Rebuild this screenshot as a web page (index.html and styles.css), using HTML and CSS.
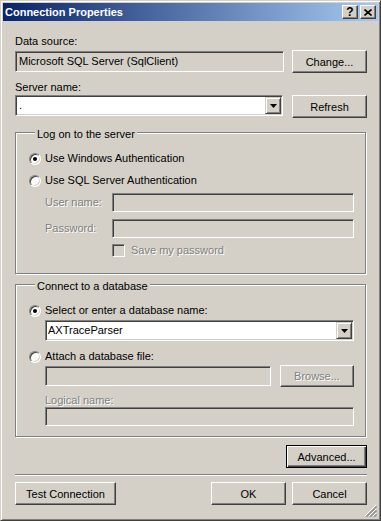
FILE: index.html
```html
<!DOCTYPE html>
<html>
<head>
    <title>Connection Properties</title>
    <link rel="stylesheet" href="styles.css">
</head>
<body>
    <div class="window">
        <div class="titlebar">
            <span class="title">Connection Properties</span>
            <div class="caption-buttons">
                <span class="cap-btn cap-help">?</span>
                <span class="cap-btn">
                    <svg width="8" height="7" viewBox="0 0 8 7"><path d="M0.5 0.5 L7.5 6.5 M7.5 0.5 L0.5 6.5" stroke="#000" stroke-width="1.6" fill="none"/></svg>
                </span>
            </div>
        </div>

        <div class="content">
            <div class="label">Data source:</div>
            <div class="row row-source">
                <div class="field field-readonly source-field">Microsoft SQL Server (SqlClient)</div>
                <button class="btn btn-side">Change...</button>
            </div>

            <div class="label label-server">Server name:</div>
            <div class="row row-server">
                <div class="field combo server-combo">
                    <span class="combo-text">.</span>
                    <span class="combo-button">
                        <svg width="7" height="4" viewBox="0 0 7 4"><polygon points="0,0 7,0 3.5,4" fill="#000"/></svg>
                    </span>
                </div>
                <button class="btn btn-side">Refresh</button>
            </div>

            <div class="group group-logon">
                <div class="group-title">Log on to the server</div>
                <div class="option option-first">
                    <span class="radio"><span class="radio-dot"></span></span>
                    <span>Use Windows Authentication</span>
                </div>
                <div class="option option-next">
                    <span class="radio"></span>
                    <span>Use SQL Server Authentication</span>
                </div>
                <div class="cred-row cred-user">
                    <span class="cred-label disabled">User name:</span>
                    <div class="field field-disabled cred-input"></div>
                </div>
                <div class="cred-row cred-pass">
                    <span class="cred-label disabled">Password:</span>
                    <div class="field field-disabled cred-input"></div>
                </div>
                <div class="check-row">
                    <span class="checkbox"></span>
                    <span class="disabled">Save my password</span>
                </div>
            </div>

            <div class="group group-db">
                <div class="group-title">Connect to a database</div>
                <div class="option option-first">
                    <span class="radio"><span class="radio-dot"></span></span>
                    <span>Select or enter a database name:</span>
                </div>
                <div class="field combo db-combo">
                    <span class="combo-text combo-text-tight">AXTraceParser</span>
                    <span class="combo-button">
                        <svg width="7" height="4" viewBox="0 0 7 4"><polygon points="0,0 7,0 3.5,4" fill="#000"/></svg>
                    </span>
                </div>
                <div class="option option-attach">
                    <span class="radio"></span>
                    <span>Attach a database file:</span>
                </div>
                <div class="file-row">
                    <div class="field field-disabled file-input"></div>
                    <button class="btn btn-browse disabled">Browse...</button>
                </div>
                <div class="indent-label disabled">Logical name:</div>
                <div class="field field-disabled logical-input"></div>
            </div>

            <div class="row row-advanced">
                <button class="btn btn-default">Advanced...</button>
            </div>

            <div class="separator"></div>

            <div class="row row-bottom">
                <button class="btn btn-test">Test Connection</button>
                <div class="bottom-right">
                    <button class="btn btn-side">OK</button>
                    <button class="btn btn-side">Cancel</button>
                </div>
            </div>
        </div>

        <svg class="grip" width="12" height="12" viewBox="0 0 12 12">
            <path d="M11 0 L0 11 M11 4 L4 11 M11 8 L8 11" stroke="#fff" stroke-width="1" fill="none"/>
            <path d="M11.5 1 L1 11.5 M12 1.5 L1.5 12 M11.5 5 L5 11.5 M12 5.5 L5.5 12 M11.5 9 L9 11.5 M12 9.5 L9.5 12" stroke="#808080" stroke-width="1" fill="none"/>
        </svg>
    </div>
</body>
</html>
```

FILE: styles.css
```css
body {
    margin: 0;
    background-color: #d4d0c8;
    font-family: "Liberation Sans", Arial, sans-serif;
    font-size: 11px;
    line-height: 13px;
    color: #000000;
}

.window {
    position: relative;
    box-sizing: border-box;
    width: 381px;
    height: 521px;
    padding: 2px;
    background-color: #d4d0c8;
    border: 1px solid;
    border-color: #d4d0c8 #404040 #404040 #d4d0c8;
    box-shadow: inset 1px 1px #ffffff, inset -1px -1px #808080;
}

/* title bar */
.titlebar {
    display: flex;
    align-items: center;
    justify-content: space-between;
    height: 18px;
    padding: 0 2px 0 2px;
    background: linear-gradient(to right, #0a246a, #a6caf0);
}

.title {
    color: #ffffff;
    font-weight: bold;
}

.caption-buttons {
    display: flex;
    gap: 2px;
}

.cap-btn {
    display: flex;
    align-items: center;
    justify-content: center;
    box-sizing: border-box;
    width: 16px;
    height: 14px;
    background-color: #d4d0c8;
    border: 1px solid;
    border-color: #ffffff #404040 #404040 #ffffff;
    box-shadow: inset -1px -1px #808080;
    font-weight: bold;
    font-size: 12px;
}

/* content */
.content {
    padding: 14px 11px 0 12px;
}

.row {
    display: flex;
    justify-content: space-between;
}

.row-source {
    margin-top: 2px;
    align-items: center;
}

.label-server {
    margin-top: 8px;
}

.row-server {
    margin-top: 1px;
    align-items: flex-start;
}

.field {
    box-sizing: border-box;
    height: 21px;
    padding: 0 2px;
    border: 1px solid;
    border-color: #808080 #ffffff #ffffff #808080;
    box-shadow: inset 1px 1px #404040, inset -1px -1px #d4d0c8;
    background-color: #ffffff;
    line-height: 19px;
    white-space: nowrap;
}

.field-readonly,
.field-disabled {
    background-color: #d4d0c8;
}

.source-field {
    width: 269px;
    padding-left: 3px;
}

.combo {
    display: flex;
    align-items: center;
    padding: 0 1px 0 1px;
}

.combo-text {
    flex: 1;
    padding-left: 2px;
}

.combo-text-tight {
    padding-left: 1px;
}

.combo-button {
    display: flex;
    align-items: center;
    justify-content: center;
    box-sizing: border-box;
    width: 16px;
    height: 17px;
    background-color: #d4d0c8;
    border: 1px solid;
    border-color: #d4d0c8 #404040 #404040 #d4d0c8;
    box-shadow: inset 1px 1px #ffffff, inset -1px -1px #808080;
}

.server-combo {
    width: 268px;
}

.btn {
    box-sizing: border-box;
    height: 23px;
    padding: 0;
    background-color: #d4d0c8;
    border: 1px solid;
    border-color: #ffffff #404040 #404040 #ffffff;
    box-shadow: inset -1px -1px #808080;
    font-family: "Liberation Sans", Arial, sans-serif;
    font-size: 11px;
    color: #000000;
}

.btn-side {
    width: 75px;
}

.disabled {
    color: #808080;
    text-shadow: 1px 1px #ffffff;
}

/* group boxes */
.group {
    margin-right: 1px;
    padding: 0 11px 0 13px;
    border: 1px solid #808080;
    box-shadow: inset 1px 1px #ffffff, 1px 1px #ffffff;
}

.group-logon {
    margin-top: 14px;
    padding-bottom: 16px;
}

.group-db {
    margin-top: 10px;
    padding-bottom: 10px;
}

.group-title {
    width: fit-content;
    margin: -5px 0 0 6px;
    padding: 0 2px;
    background-color: #d4d0c8;
}

.option {
    display: flex;
    align-items: center;
    gap: 4px;
    height: 13px;
}

.option-first {
    margin-top: 11px;
}

.option-next {
    margin-top: 9px;
}

.option-attach {
    margin-top: 9px;
}

.radio {
    display: flex;
    align-items: center;
    justify-content: center;
    box-sizing: border-box;
    width: 12px;
    height: 12px;
    border-radius: 50%;
    border: 1px solid;
    border-color: #808080 #ffffff #ffffff #808080;
    box-shadow: inset 1px 1px #404040, inset -1px -1px #d4d0c8;
    background-color: #ffffff;
}

.radio-dot {
    width: 4px;
    height: 4px;
    border-radius: 50%;
    background-color: #000000;
}

.cred-row {
    display: flex;
    align-items: center;
    margin-left: 16px;
}

.cred-user {
    margin-top: 6px;
}

.cred-pass {
    margin-top: 7px;
}

.cred-label {
    width: 67px;
}

.cred-input {
    flex: 1;
    height: 19px;
}

.check-row {
    display: flex;
    align-items: center;
    gap: 6px;
    height: 13px;
    margin: 6px 0 0 83px;
}

.checkbox {
    box-sizing: border-box;
    width: 13px;
    height: 13px;
    border: 1px solid;
    border-color: #808080 #ffffff #ffffff #808080;
    box-shadow: inset 1px 1px #404040, inset -1px -1px #d4d0c8;
    background-color: #d4d0c8;
}

.db-combo {
    margin: 3px 0 0 16px;
}

.file-row {
    display: flex;
    align-items: center;
    justify-content: space-between;
    height: 22px;
    margin: 2px 0 0 16px;
}

.file-input {
    width: 226px;
    height: 20px;
}

.btn-browse {
    width: 74px;
    height: 22px;
    color: #808080;
}

.indent-label {
    margin: 7px 0 0 16px;
}

.logical-input {
    height: 19px;
    margin-left: 16px;
}

/* footer */
.row-advanced {
    justify-content: flex-end;
    margin-top: 8px;
}

.btn-default {
    width: 81px;
    border-color: #000000;
    box-shadow: inset 1px 1px #ffffff, inset -1px -1px #404040, inset -2px -2px #808080;
}

.separator {
    margin-top: 6px;
    border-top: 1px solid #808080;
    border-bottom: 1px solid #ffffff;
}

.row-bottom {
    margin-top: 6px;
}

.btn-test {
    width: 101px;
}

.bottom-right {
    display: flex;
    gap: 6px;
}

.grip {
    position: absolute;
    right: 3px;
    bottom: 3px;
}
```
